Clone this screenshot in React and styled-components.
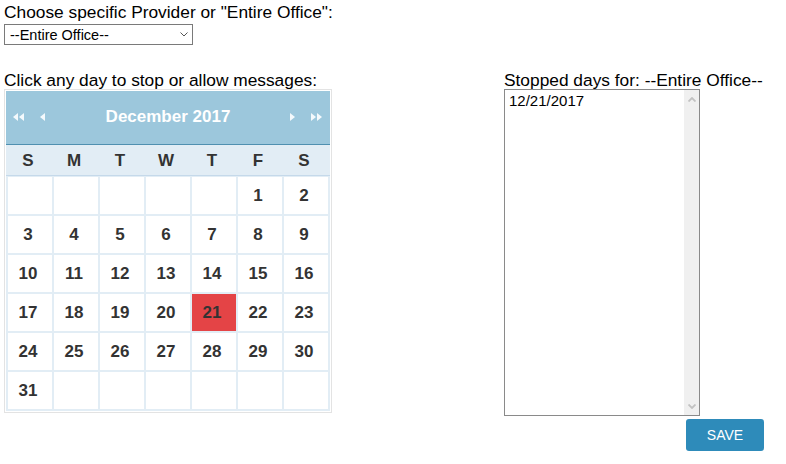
import React from 'react';
import styled, { createGlobalStyle } from 'styled-components';

const GlobalStyle = createGlobalStyle`
  body {
    margin: 0;
    background: #fff;
    color: #000;
    font-family: "Liberation Sans", Arial, sans-serif;
  }
`;

const Page = styled.div`
  padding: 3px 4px;
`;

const Label = styled.div`
  font-size: 17.33px;
  line-height: 18px;
  white-space: nowrap;
`;

const SelectWrap = styled.div`
  position: relative;
  width: 189px;
  height: 21px;
  margin-top: 3px;
`;

const Select = styled.select`
  appearance: none;
  width: 100%;
  height: 100%;
  box-sizing: border-box;
  border: 1px solid #7a7a7a;
  border-radius: 0;
  background: #fff;
  color: #000;
  padding: 0 20px 0 5px;
  font-family: "Liberation Sans", Arial, sans-serif;
  font-size: 14.5px;
  outline: none;
`;

const Chevron = styled.svg`
  position: absolute;
  right: 5px;
  top: 8px;
  pointer-events: none;
`;

const Main = styled.div`
  display: grid;
  grid-template-columns: 500px 260px;
  margin-top: 26px;
`;

const Column = styled.div`
  display: flex;
  flex-direction: column;
`;

const Calendar = styled.div`
  width: 328px;
  box-sizing: border-box;
  border: 1px solid #e3e3e3;
  padding: 1px;
`;

const Header = styled.div`
  display: flex;
  align-items: center;
  height: 53px;
  padding: 0 1px;
  background: #9cc7dc;
  border-bottom: 1px solid #4f90b0;
`;

const Nav = styled.div`
  width: 24px;
  display: flex;
  justify-content: center;
  cursor: pointer;
`;

const Title = styled.div`
  flex: 1;
  text-align: center;
  color: #fff;
  font-weight: bold;
  font-size: 17px;
  margin-top: -2px;
`;

const DayNames = styled.div`
  display: grid;
  grid-template-columns: repeat(7, 44px);
  column-gap: 2px;
  padding: 0 2px;
  height: 30px;
  align-items: center;
  background: #e2edf5;
  border-bottom: 1px solid #c5d9ea;
`;

const DayName = styled.div`
  text-align: center;
  padding-right: 4px;
  margin-top: 2px;
  font-weight: bold;
  font-size: 17px;
  color: #333;
`;

const Days = styled.div`
  display: grid;
  grid-template-columns: repeat(7, 44px);
  grid-auto-rows: 37px;
  gap: 2px;
  padding: 1px 2px 2px;
  background: #e2edf5;
`;

const Day = styled.div`
  display: flex;
  align-items: center;
  justify-content: center;
  padding-right: 4px;
  background: ${(p) => (p.$stopped ? '#e44446' : '#fff')};
  font-weight: bold;
  font-size: 17px;
  color: #333;
  cursor: ${(p) => (p.$empty ? 'default' : 'pointer')};
`;

const ListBox = styled.div`
  display: flex;
  width: 196px;
  height: 327px;
  box-sizing: border-box;
  border: 1px solid #8a8a8a;
`;

const ListText = styled.div`
  flex: 1;
  padding: 2px 4px;
  font-size: 15px;
  line-height: 17px;
`;

const ScrollTrack = styled.div`
  width: 15px;
  display: flex;
  flex-direction: column;
  justify-content: space-between;
  align-items: center;
  padding: 7px 0 6px;
  background: #f0f0f0;
`;

const ButtonRow = styled.div`
  display: flex;
  justify-content: flex-end;
  margin-top: 3px;
`;

const SaveButton = styled.button`
  width: 78px;
  height: 32px;
  border: none;
  border-radius: 3px;
  background: #2e8bba;
  color: #fff;
  font-family: "Liberation Sans", Arial, sans-serif;
  font-size: 14px;
  cursor: pointer;
`;

const Tri = ({ dir, double }) => {
  const left = dir === 'left';
  const one = (x) =>
    left ? `${x + 5},0 ${x + 5},8 ${x},4` : `${x},0 ${x},8 ${x + 5},4`;
  return (
    <svg width={double ? 12 : 6} height="9" viewBox={`0 0 ${double ? 12 : 6} 9`}>
      <polygon points={one(0)} fill="#f4f9fc" />
      {double && <polygon points={one(6)} fill="#f4f9fc" />}
    </svg>
  );
};

const Arrow = ({ up }) => (
  <svg width="8" height="5" viewBox="0 0 8 5">
    <polyline
      points={up ? '0.5,4.5 4,1 7.5,4.5' : '0.5,0.5 4,4 7.5,0.5'}
      fill="none"
      stroke="#c2c2c2"
      strokeWidth="1.8"
    />
  </svg>
);

const names = ['S', 'M', 'T', 'W', 'T', 'F', 'S'];
const cells = [];
for (let i = 0; i < 42; i++) {
  const d = i - 4;
  cells.push(d >= 1 && d <= 31 ? d : null);
}

export default function App() {
  const stopped = [21];
  return (
    <Page>
      <GlobalStyle />
      <Label>Choose specific Provider or "Entire Office":</Label>
      <SelectWrap>
        <Select defaultValue="all">
          <option value="all">--Entire Office--</option>
        </Select>
        <Chevron width="8" height="5" viewBox="0 0 8 5">
          <polyline points="0.5,0.5 4,4 7.5,0.5" fill="none" stroke="#555" strokeWidth="1" />
        </Chevron>
      </SelectWrap>
      <Main>
        <Column>
          <Label>Click any day to stop or allow messages:</Label>
          <Calendar>
            <Header>
              <Nav><Tri dir="left" double /></Nav>
              <Nav><Tri dir="left" /></Nav>
              <Title>December 2017</Title>
              <Nav><Tri dir="right" /></Nav>
              <Nav><Tri dir="right" double /></Nav>
            </Header>
            <DayNames>
              {names.map((n, i) => (
                <DayName key={i}>{n}</DayName>
              ))}
            </DayNames>
            <Days>
              {cells.slice(0, 36).concat(Array(6).fill(null)).map((d, i) => (
                <Day key={i} $empty={!d} $stopped={stopped.includes(d)}>
                  {d}
                </Day>
              ))}
            </Days>
          </Calendar>
        </Column>
        <Column>
          <Label>Stopped days for: --Entire Office--</Label>
          <ListBox>
            <ListText>12/21/2017</ListText>
            <ScrollTrack>
              <Arrow up />
              <Arrow />
            </ScrollTrack>
          </ListBox>
          <ButtonRow>
            <SaveButton>SAVE</SaveButton>
          </ButtonRow>
        </Column>
      </Main>
    </Page>
  );
}
